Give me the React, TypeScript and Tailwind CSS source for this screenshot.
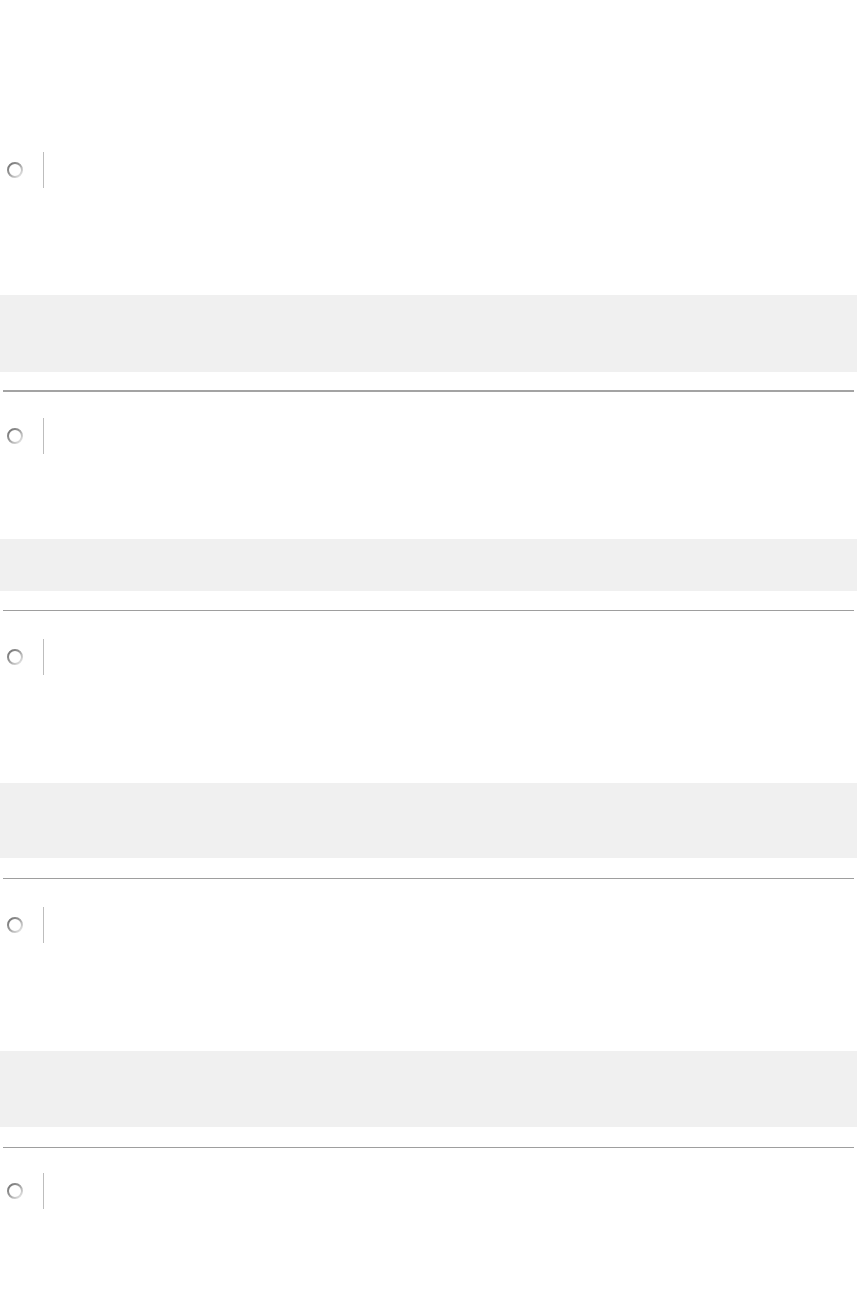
const items = [
  { gap: 'mt-[107px]', band: 'h-[77px]', line: 'mt-[18px] h-[2px] bg-[#a3a3a3]', next: 'pt-[26px]' },
  { gap: 'mt-[85px]', band: 'h-[52px]', line: 'mt-[19px] h-px bg-[#9e9e9e]', next: 'pt-[28px]' },
  { gap: 'mt-[108px]', band: 'h-[75px]', line: 'mt-[20px] h-px bg-[#9e9e9e]', next: 'pt-[28px]' },
  { gap: 'mt-[108px]', band: 'h-[76px]', line: 'mt-[20px] h-px bg-[#9e9e9e]', next: 'pt-[25px]' },
];

function Radio() {
  return (
    <svg width="18" height="18" viewBox="0 0 18 18" className="ml-[6px] shrink-0">
      <defs>
        <linearGradient id="rg" x1="0" y1="0" x2="1" y2="1">
          <stop offset="0" stopColor="#6f6f6f" />
          <stop offset="0.45" stopColor="#9a9a9a" />
          <stop offset="1" stopColor="#f0f0f0" />
        </linearGradient>
      </defs>
      <circle cx="9" cy="9" r="7" fill="#fff" stroke="url(#rg)" strokeWidth="2" />
    </svg>
  );
}

function OptionRow() {
  return (
    <div className="flex h-[36px] items-center">
      <Radio />
      <div className="ml-[19px] h-full w-px bg-[#bdbdbd]" />
    </div>
  );
}

export default function App() {
  return (
    <div className="min-h-[1291px] bg-white pt-[152px] font-['Liberation_Sans',sans-serif]">
      {items.map((it, i) => (
        <div key={i}>
          <OptionRow />
          <div className={`${it.gap} ${it.band} w-full bg-[#f0f0f0]`} />
          <div className={`${it.line} mx-[3px]`} />
          <div className={it.next} />
        </div>
      ))}
      <OptionRow />
    </div>
  );
}
